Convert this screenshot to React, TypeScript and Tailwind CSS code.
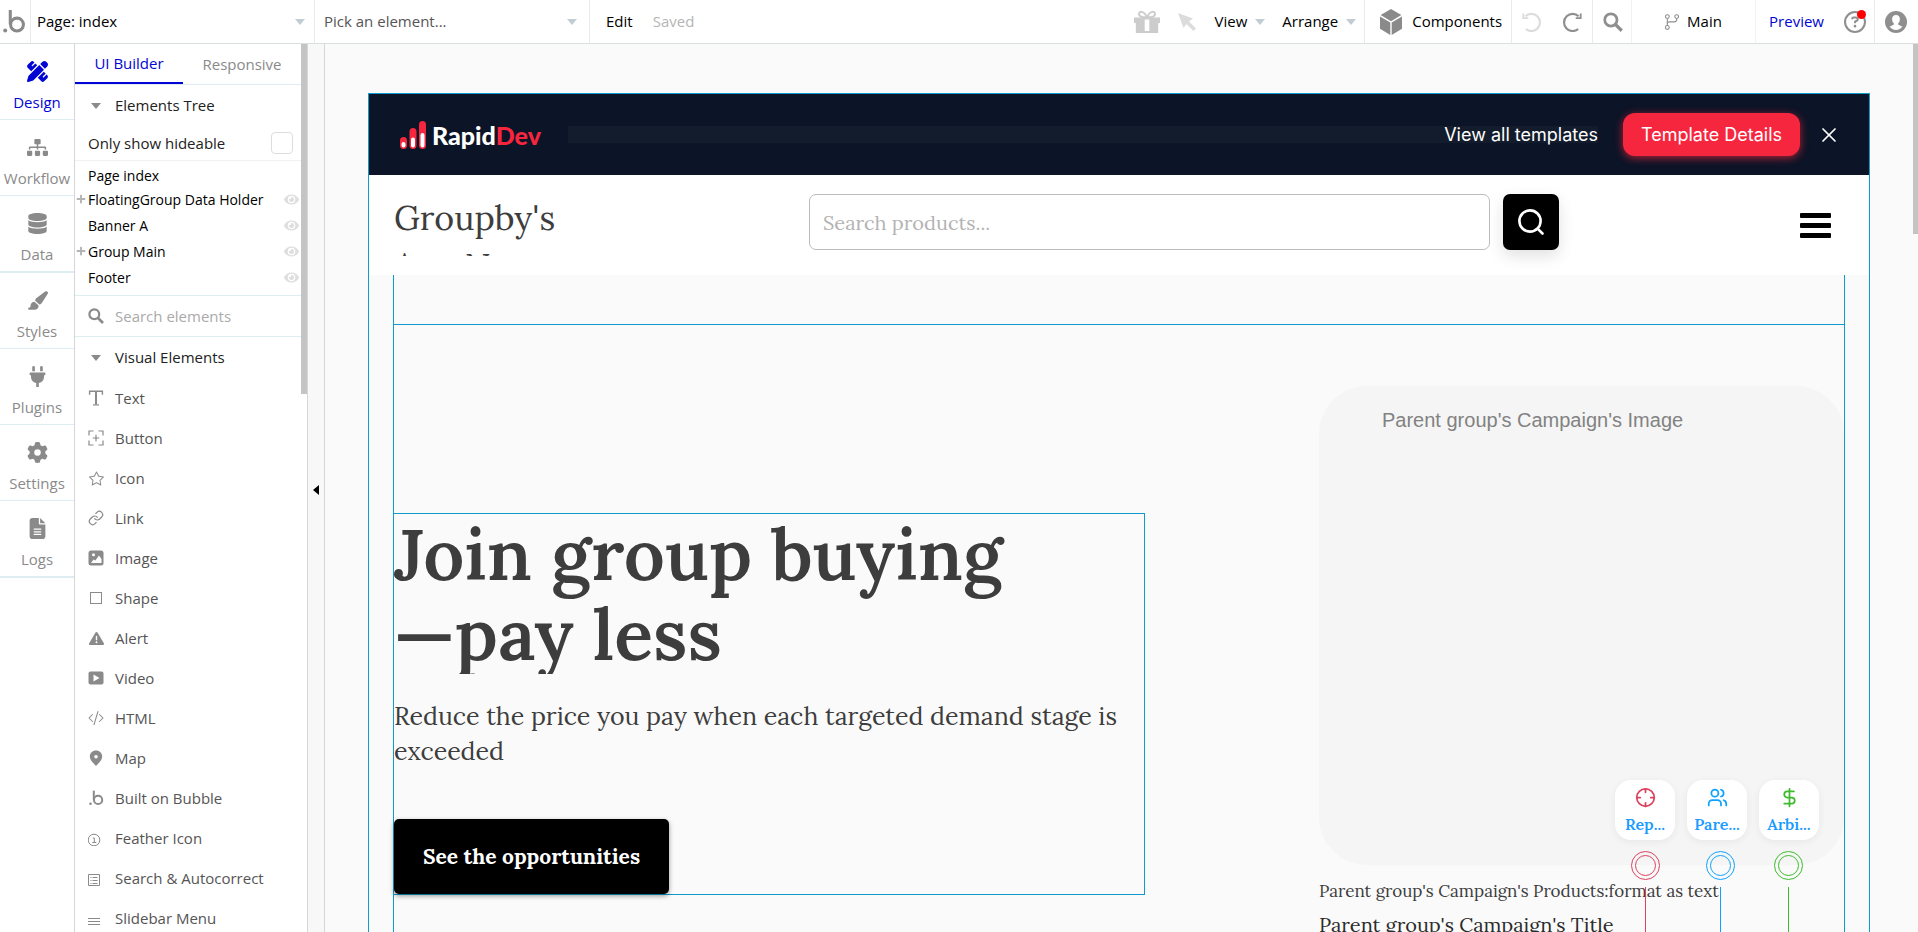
import type { ReactNode } from 'react';
import clsx from 'clsx';
import { Link, Users, DollarSign, Crosshair, X } from 'lucide-react';
import { FaSitemap, FaDatabase, FaPlug, FaEye, FaPlus } from 'react-icons/fa';
import { FaPenRuler, FaPaintbrush, FaGear, FaFileLines, FaTriangleExclamation, FaRegCircleQuestion } from 'react-icons/fa6';
import { BsCodeSlash, BsStar } from 'react-icons/bs';
import { GoGitBranch } from 'react-icons/go';

// --- Icons ---

const BubbleMark = ({ className }: { className?: string }) => (
    <svg viewBox="0 0 24 26" className={className} fill="none" aria-hidden="true">
        <circle cx="2.3" cy="22.4" r="2.1" fill="currentColor" />
        <circle cx="14.6" cy="16.2" r="6.7" stroke="currentColor" strokeWidth="3.2" />
        <path d="M7.6 1v15" stroke="currentColor" strokeWidth="3.2" />
    </svg>
);

const Caret = ({ className }: { className?: string }) => (
    <svg viewBox="0 0 10 6" className={clsx('h-[6px] w-[10px] shrink-0', className)} fill="currentColor" aria-hidden="true">
        <path d="M0 0h10L5 6z" />
    </svg>
);

const GiftIcon = () => (
    <svg viewBox="0 0 26 24" className="h-6 w-[26px]" aria-hidden="true">
        <path d="M0 7.500h26v5.500h-1.800v10H1.800V13H0z" fill="currentColor" />
        <path d="M13 7.500C9.500 7.500 5 6.800 5 4s5-4 8 3.500C16 0 21 1.200 21 4s-4.500 3.500-8 3.500z" fill="none" stroke="currentColor" strokeWidth="2" />
        <path d="M10.700 9.500h4.600V21h-4.600z" fill="#fff" />
    </svg>
);

const CursorIcon = () => (
    <svg viewBox="0 0 18 18" className="size-[18px]" fill="currentColor" aria-hidden="true">
        <path d="M0 0l15 5.500-4 3 7 7-2.500 2.500-7-7L5.500 15z" />
    </svg>
);

const CubeIcon = () => (
    <svg viewBox="0 0 22 26" className="h-[26px] w-[22px]" fill="currentColor" aria-hidden="true">
        <path d="M11 0l10.4 6L11 12.2.6 6zM0 7.4l10.3 6.1V26L0 19.8zM22 7.4l-10.3 6.1V26L22 19.8z" />
    </svg>
);

const RedoIcon = ({ className }: { className?: string }) => (
    <svg viewBox="0 0 20 20" className={clsx('size-5', className)} fill="none" stroke="currentColor" strokeWidth="2.2" aria-hidden="true">
        <path d="M16.2 17A8.6 8.6 0 1 1 16.600 4.200" />
        <path d="M18.7 1.500v4.700h-5" strokeWidth="1.8" />
    </svg>
);

const AvatarIcon = () => (
    <svg viewBox="0 0 22 22" className="size-[22px]" aria-hidden="true">
        <circle cx="11" cy="11" r="11" fill="#8f8f8f" />
        <path d="M11 4c2.600 0 3.900 1.800 3.900 4.200 0 1.900-.8 3.300-1.800 4.200v1.200l4.300 2.200c-1.500 2-3.800 3.200-6.400 3.200s-4.900-1.200-6.400-3.200l4.300-2.200v-1.200c-1-.9-1.800-2.300-1.800-4.200C7.100 5.800 8.400 4 11 4z" fill="#fff" />
    </svg>
);

const TextIcon = () => (
    <svg viewBox="0 0 16 16" className="size-4" fill="none" stroke="currentColor" aria-hidden="true">
        <path d="M1.600 4.800V1.200h12.800v3.600" strokeWidth="1.400" />
        <path d="M8 1v13.500" strokeWidth="2" />
        <path d="M5 14.900h6" strokeWidth="1.200" />
    </svg>
);

const ButtonIcon = () => (
    <svg viewBox="0 0 16 16" className="size-4" fill="none" stroke="currentColor" strokeWidth="1.200" aria-hidden="true">
        <path d="M1 5.500V1h4.500M10.500 1H15v4.500M15 10.500V15h-4.500M5.500 15H1v-4.500M8 4.800v6.400M4.800 8h6.400" />
    </svg>
);

const ImageIcon = () => (
    <svg viewBox="0 0 16 16" className="size-4" aria-hidden="true">
        <rect x=".5" y=".5" width="15" height="15" rx="2.500" fill="currentColor" />
        <circle cx="5.500" cy="4.800" r="1.500" fill="#fff" />
        <path d="M3 13l2.600-3.500 1.800 1 3.600-5L13.500 9v4z" fill="#fff" />
    </svg>
);

const ShapeIcon = () => (
    <svg viewBox="0 0 16 16" className="size-4" fill="none" stroke="currentColor" aria-hidden="true">
        <rect x="2.500" y="2.500" width="11" height="11" />
    </svg>
);

const VideoIcon = () => (
    <svg viewBox="0 0 16 16" className="size-4" aria-hidden="true">
        <rect x=".5" y="1.500" width="15" height="13" rx="2" fill="currentColor" />
        <path d="M5.500 4.500v7l6-3.500z" fill="#fff" />
    </svg>
);

const MapIcon = () => (
    <svg viewBox="0 0 16 16" className="size-4" aria-hidden="true">
        <path d="M8 .5c3.500 0 6.200 2.600 6.200 6 0 3.600-3.400 6.200-6.200 9.500C5.200 12.700 1.800 10.100 1.800 6.500c0-3.400 2.700-6 6.200-6z" fill="currentColor" />
        <circle cx="8" cy="6.800" r="1.800" fill="#fff" />
    </svg>
);

const FeatherIcon = () => (
    <svg viewBox="0 0 16 16" className="size-4" fill="none" stroke="currentColor" aria-hidden="true">
        <circle cx="6" cy="10" r="5.800" />
        <path d="M4.800 8h1.500v4.500M4.300 12.500h4" />
    </svg>
);

const ListIcon = () => (
    <svg viewBox="0 0 16 16" className="size-4" fill="none" stroke="currentColor" aria-hidden="true">
        <path d="M.5 4.500h11v11H.5zM2.500 7.500h1M4.500 7.500h5M2.500 10.500h1M4.500 10.500h5M2.500 13.500h1M4.500 13.500h5" />
    </svg>
);

const MenuLinesIcon = () => (
    <svg viewBox="0 0 16 16" className="size-4" fill="none" stroke="currentColor" aria-hidden="true">
        <path d="M0 8.500h12M0 11.500h12M0 14.500h12" />
    </svg>
);

const BoldSearchIcon = ({ className }: { className?: string }) => (
    <svg viewBox="0 0 16 16" className={className} fill="none" stroke="currentColor" aria-hidden="true">
        <circle cx="6.300" cy="6.300" r="4.900" strokeWidth="2.200" />
        <path d="M10 10l5 5" strokeWidth="2.600" />
    </svg>
);

const RapidBars = () => (
    <svg viewBox="0 0 26 28" className="h-7 w-[26px]" aria-hidden="true">
        <rect x="0" y="16" width="7" height="12" rx="3.500" fill="#f7263f" />
        <rect x="9.500" y="7" width="7" height="21" rx="3.500" fill="#f7263f" />
        <rect x="19" y="0" width="7" height="28" rx="3.500" fill="#f7263f" />
        <rect x="1.500" y="21" width="4" height="5.500" rx="2" fill="#fff" />
        <rect x="11" y="16.500" width="4" height="10" rx="2" fill="#fff" />
        <rect x="20.500" y="12" width="4" height="14.500" rx="2" fill="#fff" />
    </svg>
);

// --- Data ---

const railItems = [
    { label: 'Design', icon: FaPenRuler, active: true },
    { label: 'Workflow', icon: FaSitemap },
    { label: 'Data', icon: FaDatabase, groupEnd: true },
    { label: 'Styles', icon: FaPaintbrush },
    { label: 'Plugins', icon: FaPlug },
    { label: 'Settings', icon: FaGear },
    { label: 'Logs', icon: FaFileLines, groupEnd: true },
];

const treeItems = [
    { label: 'FloatingGroup Data Holder', expandable: true },
    { label: 'Banner A' },
    { label: 'Group Main', expandable: true },
    { label: 'Footer' },
];

const visualElements: { label: string; icon: ReactNode }[] = [
    { label: 'Text', icon: <TextIcon /> },
    { label: 'Button', icon: <ButtonIcon /> },
    { label: 'Icon', icon: <BsStar size={15} /> },
    { label: 'Link', icon: <Link size={16} strokeWidth={1.8} /> },
    { label: 'Image', icon: <ImageIcon /> },
    { label: 'Shape', icon: <ShapeIcon /> },
    { label: 'Alert', icon: <FaTriangleExclamation size={15} /> },
    { label: 'Video', icon: <VideoIcon /> },
    { label: 'HTML', icon: <BsCodeSlash size={16} /> },
    { label: 'Map', icon: <MapIcon /> },
    { label: 'Built on Bubble', icon: <BubbleMark className="h-4 w-[15px]" /> },
    { label: 'Feather Icon', icon: <FeatherIcon /> },
    { label: 'Search & Autocorrect', icon: <ListIcon /> },
    { label: 'Slidebar Menu', icon: <MenuLinesIcon /> },
];

const stages = [
    { label: 'Rep...', icon: Crosshair, color: 'text-[#d9435e]', gap: '' },
    { label: 'Pare...', icon: Users, color: 'text-[#0da2ff]', gap: 'ml-[46px]' },
    { label: 'Arbi...', icon: DollarSign, color: 'text-[#3dbb2c]', gap: 'ml-[39px]' },
];

// --- Editor chrome ---

const TopBar = () => (
    <header className="flex h-11 shrink-0 items-stretch border-b border-[#d9dede] bg-white text-[15px] text-black">
        <a href="#" aria-label="Home" className="flex w-[31px] items-center border-r border-[#e6ecee] pl-[3px] text-[#8a8a8a]">
            <BubbleMark className="h-[25px] w-[23px]" />
        </a>
        <label className="relative flex w-[284px] items-center border-r border-[#e6ecee] text-[#c2cdd3]">
            <select aria-label="Page" className="h-full w-full appearance-none bg-transparent pl-[6px] text-black outline-none">
                <option>Page: index</option>
            </select>
            <Caret className="pointer-events-none absolute right-[9px]" />
        </label>
        <label className="relative flex w-[275px] items-center border-r border-[#e6ecee] text-[#c2cdd3]">
            <select aria-label="Element" className="h-full w-full appearance-none bg-transparent pl-[9px] text-[#555] outline-none">
                <option>Pick an element...</option>
            </select>
            <Caret className="pointer-events-none absolute right-3" />
        </label>
        <button className="ml-4">Edit</button>
        <span className="ml-5 self-center text-[#b5b5b5]">Saved</span>

        <div className="ml-auto flex items-stretch">
            <button aria-label="Gift" className="mr-[18px] text-[#ccc]"><GiftIcon /></button>
            <button aria-label="Select" className="mr-[19px] text-[#dcdcdc]"><CursorIcon /></button>
            <button className="mr-[17px] flex items-center gap-2">View <Caret className="text-[#c2cdd3]" /></button>
            <button className="mr-2 flex items-center gap-2">Arrange <Caret className="text-[#c2cdd3]" /></button>
            <button className="flex items-center gap-[10px] border-l border-[#e6ecee] pr-[9px] pl-[15px]">
                <span className="text-[#8a8a8a]"><CubeIcon /></span>
                Components
            </button>
            <div className="flex items-center gap-5 border-l border-[#e6ecee] px-[10px]">
                <button aria-label="Undo" className="text-[#dcdcdc]"><RedoIcon className="-scale-x-100" /></button>
                <button aria-label="Redo" className="text-[#8f8f8f]"><RedoIcon /></button>
            </div>
            <button aria-label="Search" className="w-[39px] border-l border-[#e6ecee] pl-[10px] text-[#8f8f8f]">
                <BoldSearchIcon className="size-5" />
            </button>
            <button className="flex w-[124px] items-center gap-[6px] border-l border-[#eef2f3] pl-[31px]">
                <GoGitBranch size={18} className="text-[#8f8f8f]" />
                Main
            </button>
            <div className="flex items-center gap-5 border-l border-[#eef2f3] pr-2 pl-[13px]">
                <a href="#" className="text-[#0205d3]">Preview</a>
                <button aria-label="Help" className="relative text-[#8f8f8f]">
                    <FaRegCircleQuestion size={22} />
                    <span className="absolute -top-px right-0 size-[9px] rounded-full bg-[#ff0000]" />
                </button>
            </div>
            <button aria-label="Account" className="w-11 border-l border-[#e6ecee] pl-[10px]"><AvatarIcon /></button>
        </div>
    </header>
);

const SideRail = () => (
    <nav className="w-[75px] shrink-0 border-r border-[#d6d6d6] bg-white">
        {railItems.map(({ label, icon: Icon, active, groupEnd }) => (
            <button
                key={label}
                className={clsx(
                    'flex w-full flex-col items-center border-[#deedf2] pt-[17px] text-[15px] leading-6',
                    groupEnd ? 'h-[77px] border-b-2' : 'h-[76px] border-b',
                    active ? 'text-[#0205d3]' : 'text-[#8a8a8a]',
                )}
            >
                <Icon size={21} className="mb-2" />
                {label}
            </button>
        ))}
    </nav>
);

const BuilderPanel = () => (
    <aside className="flex w-[233px] shrink-0 overflow-hidden border-r border-[#d6d6d6] bg-white text-[15px]">
        <div className="min-w-0 flex-1">
            <div role="tablist" className="flex h-[41px] border-b border-[#deedf2]">
                <button role="tab" aria-selected="true" className="h-10 w-[108px] border-b-2 border-[#0205d3] text-[#0205d3]">UI Builder</button>
                <button role="tab" aria-selected="false" className="w-[118px] text-[#8a8a8a]">Responsive</button>
            </div>

            <button className="flex h-[41px] w-full items-center gap-[14px] pl-4 text-[#222]">
                <Caret className="text-[#8a8a8a]" />
                Elements Tree
            </button>
            <label className="flex h-[35px] items-center justify-between border-b border-[#eef2f3] pr-2 pl-[13px] text-[#222]">
                Only show hideable
                <input type="checkbox" className="size-[22px] appearance-none rounded-[4px] border border-[#ddd] bg-white" />
            </label>

            <div className="border-b border-[#deedf2] py-[5px] text-[14px] text-black">
                <p className="h-5 pl-[13px] leading-5">Page index</p>
                {treeItems.map(({ label, expandable }) => (
                    <div key={label} className="flex h-[26px] items-center pr-[2px]">
                        <span className="w-[13px] pl-px text-[#b3b3b3]">{expandable && <FaPlus size={10} />}</span>
                        <span className="flex-1 whitespace-nowrap">{label}</span>
                        <button aria-label={`Toggle ${label}`} className="text-[#dedede]"><FaEye size={15} /></button>
                    </div>
                ))}
            </div>

            <label className="flex h-[41px] items-center gap-[11px] border-b border-[#deedf2] pl-[13px]">
                <BoldSearchIcon className="size-4 shrink-0 text-[#8a8a8a]" />
                <input type="text" aria-label="Search elements" placeholder="Search elements" className="w-full min-w-0 outline-none placeholder:text-[#aaa]" />
            </label>

            <button className="flex h-[41px] w-full items-center gap-[14px] pl-4 text-[#222]">
                <Caret className="text-[#8a8a8a]" />
                Visual Elements
            </button>
            <ul>
                {visualElements.map(({ label, icon }) => (
                    <li key={label} className="flex h-10 items-center gap-[11px] pl-[13px] text-[#555]">
                        <span className="flex w-4 justify-center text-[#8a8a8a]">{icon}</span>
                        {label}
                    </li>
                ))}
            </ul>
        </div>
        <div className="h-[350px] w-[6px] bg-[#c4c4c4]" />
    </aside>
);

// --- Page being edited ---

const Banner = () => (
    <div className="flex h-[81px] items-center bg-[#0c1427] pr-7 pl-[31px] font-[Inter,sans-serif] text-[18px] text-white">
        <a href="#" className="flex items-center gap-[6px] font-[Lato,sans-serif] text-[25px] leading-8 font-black">
            <RapidBars />
            <span>Rapid<span className="text-[#f7263f]">Dev</span></span>
        </a>
        <div className="ml-[27px] flex h-[17px] flex-1 items-center justify-end bg-[#131c2c]">
            <a href="#">View all templates</a>
        </div>
        <button className="mr-[17px] ml-[25px] h-[43px] w-[177px] rounded-xl bg-[#f7263f] shadow-[0_2px_8px_rgba(247,38,63,0.7)]">
            Template Details
        </button>
        <button aria-label="Close"><X size={24} strokeWidth={1.7} /></button>
    </div>
);

const PageHeader = () => (
    <div className="flex h-[100px] items-start bg-white px-[25px] pt-[19px]">
        <div className="mr-[215px] h-[62px] w-[200px] overflow-hidden text-[34px] leading-[48px]">Groupby's App Name</div>
        <input
            type="text"
            aria-label="Search products"
            placeholder="Search products..."
            className="h-14 min-w-0 flex-1 rounded-[7px] border border-[#bbb] px-[13px] text-[20px] outline-none placeholder:text-[#b3b3b3]"
        />
        <button aria-label="Search" className="ml-[13px] flex size-14 items-center justify-center rounded-[7px] bg-black text-white shadow-[0_6px_16px_rgba(0,0,0,0.12)]">
            <svg viewBox="0 0 26 26" className="size-[26px]" fill="none" stroke="currentColor" strokeWidth="2.600" strokeLinecap="round" aria-hidden="true">
                <circle cx="12" cy="12" r="10.600" />
                <path d="M19.800 19.800l4.700 4.700" />
            </svg>
        </button>
        <button aria-label="Menu" className="mt-[19px] mr-[13px] ml-[241px] flex w-[31px] flex-col gap-[5px]">
            <span className="h-[5px] w-full rounded-[1px] bg-black" />
            <span className="h-[5px] w-full rounded-[1px] bg-black" />
            <span className="h-[5px] w-full rounded-[1px] bg-black" />
        </button>
    </div>
);

const CampaignCard = () => (
    <div className="relative mt-[61px] w-[525px]">
        <div className="h-[479px] rounded-[48px] bg-[#f5f5f5] pt-[22px] pl-[63px]">
            <p className="h-[23px] overflow-hidden font-['Liberation_Sans',Arial,sans-serif] text-[20px] leading-6 text-[#828282]">
                Parent group's Campaign's Image
            </p>
        </div>
        <p className="mt-[14px] text-[17px] leading-6">Parent group's Campaign's Products:format as text</p>
        <p className="mt-2 text-[20px] leading-7 text-[#2b2b2b]">Parent group's Campaign's Title</p>

        {/* Stage cards float above the campaign image */}
        <div className="absolute top-[394px] right-[25px] flex gap-3">
            {stages.map(({ label, icon: Icon, color }) => (
                <div key={label} className="flex size-[60px] flex-col items-center rounded-2xl bg-white pt-[7px] shadow-[0_2px_8px_rgba(0,0,0,0.06)]">
                    <Icon size={21} className={color} />
                    <span className="mt-1 text-[16px] leading-6 font-semibold text-[#1a9bff]">{label}</span>
                </div>
            ))}
        </div>
        <div className="absolute top-[465px] right-[41px] flex">
            {stages.map(({ label, color, gap }) => (
                <div key={label} className={clsx('flex flex-col items-center gap-[7px]', color, gap)}>
                    <span className="flex size-[29px] items-center justify-center rounded-full border border-current">
                        <span className="size-[21px] rounded-full border border-current" />
                    </span>
                    <span className="h-20 w-px bg-current" />
                </div>
            ))}
        </div>
    </div>
);

const Canvas = () => (
    <main className="relative min-w-0 flex-1 overflow-hidden bg-[#fafafa] pt-[49px] pr-12 pl-[43px]">
        <div className="border-x border-t border-[#0d9ccc] font-[Lora,'Liberation_Serif',serif] text-[#3d3d3d]">
            <Banner />
            <PageHeader />
            <section className="mx-6 border-x border-[#0d9ccc] pt-[49px]">
                <div className="flex h-[1000px] items-start justify-between border-t border-[#0d9ccc]">
                    <div className="mt-[188px] -ml-px w-[752px] border border-[#0d9ccc]">
                        <h1 className="h-40 overflow-hidden text-[72px] leading-[80px] font-semibold">Join group buying<br />—pay less</h1>
                        <p className="mt-[25px] text-[25px] leading-[35px]">
                            Reduce the price you pay when each targeted demand stage is exceeded
                        </p>
                        <button className="mt-[50px] block h-[75px] w-[275px] rounded-[5px] bg-black text-[21px] font-bold text-white shadow-[0_2px_5px_rgba(0,0,0,0.4)]">
                            See the opportunities
                        </button>
                    </div>
                    <CampaignCard />
                </div>
            </section>
        </div>
        <div className="absolute top-0 right-0 h-[190px] w-[5px] bg-[#c4c4c4]" />
    </main>
);

export default function App() {
    return (
        <div className="flex h-screen flex-col overflow-hidden bg-white font-['Open_Sans',sans-serif]">
            <TopBar />
            <div className="flex min-h-0 flex-1">
                <SideRail />
                <BuilderPanel />
                <div className="flex w-[17px] shrink-0 items-center justify-center border-r border-[#d6d6d6] bg-[#f8f8f8] pt-1">
                    <button aria-label="Collapse panel">
                        <svg viewBox="0 0 6 10" className="h-[10px] w-[6px]" aria-hidden="true"><path d="M6 0v10L0 5z" /></svg>
                    </button>
                </div>
                <Canvas />
            </div>
        </div>
    );
}
